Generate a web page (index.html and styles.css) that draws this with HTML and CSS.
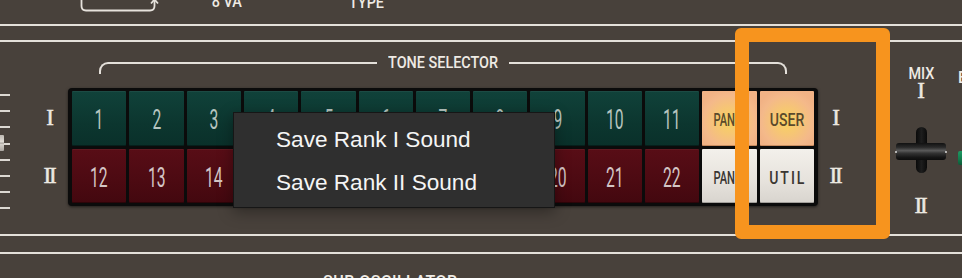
FILE: index.html
```html
<!DOCTYPE html>
<html lang="en">
<head>
<meta charset="utf-8">
<title>Tone Selector</title>
<link rel="stylesheet" href="styles.css">
</head>
<body>
<div class="panel">
  <div class="top">
    <svg class="top-bracket" width="82" height="14" viewBox="0 0 82 14">
      <path d="M1.5 0 V7 Q1.5 11.5 6 11.5 H70 Q74.5 11.5 74.5 7 V2" fill="none" stroke="#e6e2dc" stroke-width="1.8"/>
      <path d="M71 4.5 L74.5 0.5 L78 4.5" fill="none" stroke="#e6e2dc" stroke-width="1.8"/>
    </svg>
    <span class="label va">8 VA</span>
    <span class="label type">TYPE</span>
  </div>
  <div class="rule r1"></div>
  <div class="rule r2"></div>

  <div class="main">
    <div class="ticks">
      <i class="tick"></i><i class="tick"></i><i class="tick"></i><i class="tick"></i>
      <i class="tick"></i><i class="tick"></i><i class="tick"></i><i class="tick"></i>
      <div class="knob"></div>
    </div>

    <div class="tone">
      <div class="tone-head">
        <span class="bracket bl"></span>
        <span class="label title">TONE SELECTOR</span>
        <span class="bracket br"></span>
      </div>
      <div class="ranks">
        <div class="roman-col left"><span>I</span><span>II</span></div>
        <div class="frame">
          <div class="btn g"><span>1</span></div>
          <div class="btn g"><span>2</span></div>
          <div class="btn g"><span>3</span></div>
          <div class="btn g"><span>4</span></div>
          <div class="btn g"><span>5</span></div>
          <div class="btn g"><span>6</span></div>
          <div class="btn g"><span>7</span></div>
          <div class="btn g"><span>8</span></div>
          <div class="btn g"><span>9</span></div>
          <div class="btn g"><span>10</span></div>
          <div class="btn g"><span>11</span></div>
          <div class="btn p"><span class="panel-txt">PANEL</span></div>
          <div class="btn p"><span>USER</span></div>
          <div class="btn r"><span>12</span></div>
          <div class="btn r"><span>13</span></div>
          <div class="btn r"><span>14</span></div>
          <div class="btn r"><span>15</span></div>
          <div class="btn r"><span>16</span></div>
          <div class="btn r"><span>17</span></div>
          <div class="btn r"><span>18</span></div>
          <div class="btn r"><span>19</span></div>
          <div class="btn r"><span>20</span></div>
          <div class="btn r"><span>21</span></div>
          <div class="btn r"><span>22</span></div>
          <div class="btn w"><span class="panel-txt">PANEL</span></div>
          <div class="btn w"><span class="util">UTIL</span></div>
        </div>
        <div class="roman-col right"><span>I</span><span>II</span></div>
      </div>
    </div>

    <div class="mix">
      <span class="label mix-label">MIX</span>
      <span class="roman r-top">I</span>
      <div class="lever">
        <div class="lever-stem"></div>
        <div class="lever-cap"><i class="dot dl"></i><i class="dot dr"></i></div>
      </div>
      <span class="roman r-bot">II</span>
    </div>

    <div class="edge">
      <span class="label edge-label">B</span>
      <div class="edge-cap"></div>
    </div>
  </div>

  <div class="rule r3"></div>
  <div class="rule r4"></div>
  <div class="bottom"><span class="label bottom-label">SUB OSCILLATOR</span></div>

  <div class="menu">
    <div class="menu-item">Save Rank I Sound</div>
    <div class="menu-item">Save Rank II Sound</div>
  </div>
  <div class="highlight"></div>
</div>
</body>
</html>
```

FILE: styles.css
```css
* { box-sizing: border-box; }
html, body { margin: 0; padding: 0; background: #47403a; }
.panel {
  position: relative;
  width: 962px;
  height: 278px;
  overflow: hidden;
  background: #48413b;
  font-family: Roboto, "Liberation Sans", sans-serif;
  color: #ece8e2;
}

.label {
  display: inline-block;
  font-family: Roboto, "Liberation Sans", sans-serif;
  font-size: 16px;
  font-weight: 500;
  line-height: 16px;
  color: #eeeae4;
  transform: scaleX(0.9);
  white-space: nowrap;
}

/* top strip */
.top {
  height: 24px;
  display: flex;
  align-items: flex-start;
  padding-left: 80px;
}
.top-bracket { display: block; margin-top: -1px; flex: none; }
.va { margin-left: 48px; margin-top: -6px; }
.type { margin-left: 104px; margin-top: -5px; }

.rule { height: 2px; background: #e4e0da; }
.r2 { margin-top: 14px; }
.r3 { margin-top: 0; }
.r4 { margin-top: 16px; }

/* main */
.main {
  height: 192px;
  display: flex;
  align-items: flex-start;
}
.ticks {
  position: relative;
  width: 10px;
  padding-top: 52px;
  display: flex;
  flex-direction: column;
  gap: 14.2px;
  flex: none;
}
.tick { display: block; width: 10px; height: 2px; background: #dcd8d2; }
.knob {
  position: absolute;
  left: 0;
  top: 93px;
  width: 4px;
  height: 16px;
  background: linear-gradient(#bdb8b1, #e2ded8 45%, #8f8a84 50%, #d6d2cc 56%, #aaa59f);
  border-radius: 0 1px 1px 0;
}

.tone {
  margin-left: 24px;
  padding-top: 13px;
  width: 820px;
  flex: none;
}
.tone-head {
  display: flex;
  align-items: flex-start;
  height: 19px;
  padding: 0 67px 0 65px;
}
.bracket {
  flex: 1;
  height: 12px;
  margin-top: 7px;
  border-top: 2px solid #e4e0da;
}
.bl { border-left: 2px solid #e4e0da; border-top-left-radius: 9px; margin-right: 5px; }
.br { border-right: 2px solid #e4e0da; border-top-right-radius: 9px; margin-left: 5px; }
.title { flex: none; }

.ranks {
  display: flex;
  margin-top: 14px;
}
.roman-col {
  display: flex;
  flex-direction: column;
  padding-top: 3px;
  gap: 3px;
  flex: none;
}
.roman-col.left { width: 32px; margin-right: 2px; }
.roman-col.right { width: 36px; }
.roman-col span, .roman {
  font-family: "Liberation Serif", "DejaVu Serif", serif;
  font-size: 23px;
  font-weight: 400;
  -webkit-text-stroke: 0.5px #ece8e0;
  color: #ece8e0;
  text-align: center;
  letter-spacing: -2.2px;
  text-indent: -2.2px;
}
.roman-col span { height: 54.5px; line-height: 54.5px; }

.frame {
  width: 750px;
  flex: none;
  padding: 3px 4px;
  background: #0b0b0b;
  border-radius: 4px;
  box-shadow: 0 1px 3px rgba(0,0,0,0.55);
  display: grid;
  grid-template-columns: repeat(13, 1fr);
  grid-template-rows: 54.5px 54.5px;
  gap: 3px;
}
.btn {
  display: flex;
  align-items: center;
  justify-content: center;
  padding-top: 4px;
  border-radius: 1px;
  overflow: hidden;
}
.btn span {
  display: inline-block;
  font-family: Roboto, "Liberation Sans", sans-serif;
  font-size: 28px;
  line-height: 28px;
  transform: scaleX(0.56);
}
.btn.g {
  background: linear-gradient(#10423a, #0c362f 60%, #0a302a);
  box-shadow: inset 0 1px 0 rgba(255,255,255,0.05), inset 0 -1px 0 rgba(0,0,0,0.35);
}
.btn.g span { color: #b6c4bf; }
.btn.r {
  background: linear-gradient(#580d16, #4c0a12 60%, #43080f);
  box-shadow: inset 0 1px 0 rgba(255,255,255,0.05), inset 0 -1px 0 rgba(0,0,0,0.35);
}
.btn.r span { color: #d3c5c5; }
.btn.p {
  background: radial-gradient(ellipse 60% 60% at 50% 55%, #f8d35e 0%, #f6c674 40%, #f4b98a 78%, #f1b285 100%);
  box-shadow: inset 0 -1px 0 rgba(120,60,20,0.35);
}
.btn.p span, .btn.w span {
  font-size: 18px;
  line-height: 18px;
  font-weight: 500;
  transform: scaleX(0.78);
}
.btn.p span { color: #5a4a2c; }
.btn span.panel-txt { transform: scaleX(0.62); margin-left: 2px; }
.btn.w {
  background: linear-gradient(#f3f0eb, #e6e2dc 60%, #d8d4ce);
  box-shadow: inset 0 -1px 0 rgba(0,0,0,0.25);
}
.btn.w span { color: #3a3632; }
.btn.w span.util { letter-spacing: 2.5px; margin-left: 2px; }

/* mix lever */
.mix {
  margin-left: 36px;
  width: 62px;
  flex: none;
  display: flex;
  flex-direction: column;
  align-items: center;
  padding-top: 26px;
}
.mix-label { line-height: 12px; }
.roman { display: block; line-height: 20px; }
.r-top { margin-top: 1px; }
.lever {
  position: relative;
  width: 52px;
  height: 46px;
  margin-top: 26px;
}
.lever-stem {
  width: 11px;
  height: 46px;
  margin: 0 auto;
  border-radius: 5.5px;
  background: linear-gradient(90deg, #0a0a0a, #1d1d1d 50%, #0a0a0a);
}
.lever-cap {
  position: absolute;
  left: 1px;
  top: 16px;
  width: 50px;
  height: 17px;
  border-radius: 3px;
  background: linear-gradient(#111 0%, #2a2a2a 25%, #5a5a5a 45%, #333 60%, #151515 85%, #0c0c0c 100%);
}
.dot {
  position: absolute;
  top: 7.5px;
  width: 2px;
  height: 2px;
  border-radius: 1px;
  background: #d8d8d8;
}
.dl { left: -1px; }
.dr { right: -1px; }
.r-bot { margin-top: 23px; }

.edge {
  margin-left: 3px;
  width: 10px;
  flex: none;
  padding-top: 26px;
  padding-left: 3px;
}
.edge-label { line-height: 12px; transform: none; transform-origin: left; }
.edge-cap {
  margin-top: 64px;
  width: 8px;
  height: 14px;
  background: linear-gradient(#1d9a63, #127a4c 60%, #0c5a38);
  border-radius: 2px 0 0 2px;
}

/* bottom */
.bottom {
  padding-left: 323px;
  margin-top: 18px;
}
.bottom-label { transform-origin: left; transform: scaleX(1); letter-spacing: 0.5px; }

/* context menu */
.menu {
  position: absolute;
  left: 233px;
  top: 112px;
  width: 322px;
  height: 96px;
  padding: 5px 0 3px 42px;
  background: #2f2f2f;
  border: 1px solid #161616;
  box-shadow: 0 4px 14px rgba(0,0,0,0.35);
}
.menu-item {
  font-family: "Liberation Sans", Arial, sans-serif;
  font-size: 22.6px;
  line-height: 43.4px;
  color: #f5f5f5;
  white-space: nowrap;
}

/* orange highlight */
.highlight {
  position: absolute;
  left: 735px;
  top: 28px;
  width: 155px;
  height: 211px;
  border: 14px solid #f7941e;
  border-radius: 6px;
}
```
